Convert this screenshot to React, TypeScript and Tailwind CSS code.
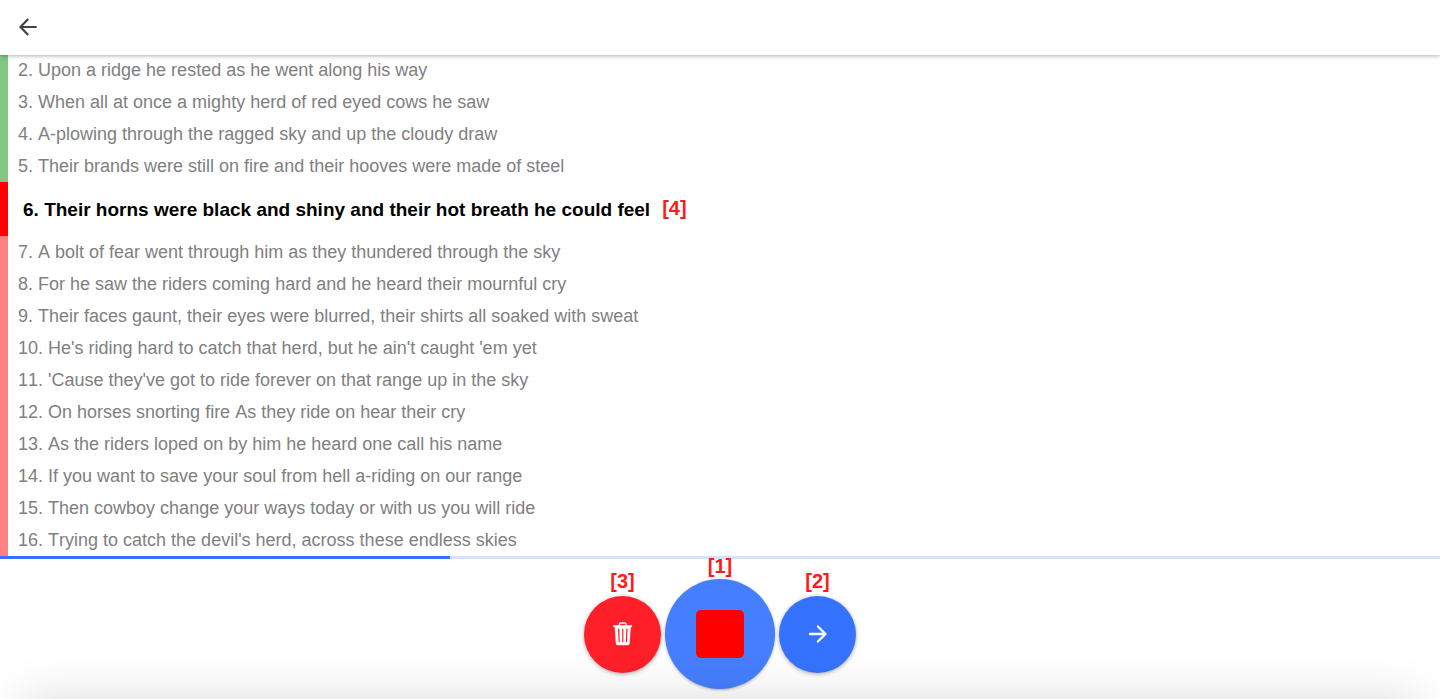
type Status = "recorded" | "current" | "pending";
type Line = { id: number; text: string; status: Status };

const lines: Line[] = [
  { id: 2, text: "Upon a ridge he rested as he went along his way", status: "recorded" },
  { id: 3, text: "When all at once a mighty herd of red eyed cows he saw", status: "recorded" },
  { id: 4, text: "A-plowing through the ragged sky and up the cloudy draw", status: "recorded" },
  { id: 5, text: "Their brands were still on fire and their hooves were made of steel", status: "recorded" },
  { id: 6, text: "Their horns were black and shiny and their hot breath he could feel", status: "current" },
  { id: 7, text: "A bolt of fear went through him as they thundered through the sky", status: "pending" },
  { id: 8, text: "For he saw the riders coming hard and he heard their mournful cry", status: "pending" },
  { id: 9, text: "Their faces gaunt, their eyes were blurred, their shirts all soaked with sweat", status: "pending" },
  { id: 10, text: "He's riding hard to catch that herd, but he ain't caught 'em yet", status: "pending" },
  { id: 11, text: "'Cause they've got to ride forever on that range up in the sky", status: "pending" },
  { id: 12, text: "On horses snorting fire As they ride on hear their cry", status: "pending" },
  { id: 13, text: "As the riders loped on by him he heard one call his name", status: "pending" },
  { id: 14, text: "If you want to save your soul from hell a-riding on our range", status: "pending" },
  { id: 15, text: "Then cowboy change your ways today or with us you will ride", status: "pending" },
  { id: 16, text: "Trying to catch the devil's herd, across these endless skies", status: "pending" },
];

const rowStyles: Record<Status, string> = {
  recorded: "h-8 border-[#81c784] pl-[10px] text-[18px] text-[#808080]",
  current: "h-[54px] border-[#ff0000] pt-0.5 pl-[15px] text-[19px] font-bold text-black",
  pending: "h-8 border-[#ff8080] pl-[10px] text-[18px] text-[#808080]",
};

const marker = "text-[20px] leading-5 font-bold text-[#ff1a1a]";

function BackIcon() {
  return (
    <svg viewBox="0 0 24 24" className="size-6" fill="none" stroke="currentColor" strokeWidth="2.2" aria-hidden="true">
      <path d="M20.7 12H5M12.2 4.1 4.5 12l7.7 7.9" />
    </svg>
  );
}

function ForwardIcon() {
  return (
    <svg
      viewBox="0 0 24 24"
      className="size-6"
      fill="none"
      stroke="currentColor"
      strokeWidth="2.3"
      strokeLinecap="round"
      strokeLinejoin="round"
      aria-hidden="true"
    >
      <path d="M4 12H19M11.900 4.500 19.500 12l-7.600 7.500" />
    </svg>
  );
}

function TrashIcon() {
  return (
    <svg viewBox="0 0 28 28" className="size-7" fill="currentColor" aria-hidden="true">
      <path
        fillRule="evenodd"
        d="M9.800 5.300V4q0-1.700 1.700-1.700h4.500q1.700 0 1.700 1.700v1.300h4.800q.7 0 .7.900t-.7.900h-.700l-1.100 16.200q-.2 1.900-2 1.900H8.800q-1.800 0-2-1.900L5.700 7.100h-.900q-.7 0-.7-.9t.7-.9zM11.200 5.300h5.100V3.700h-5.100zM9 8.700l.6 13.600h1.200l-.5-13.600zM13.200 8.700v13.600h1.200V8.700zM17.300 8.700l-.5 13.600h1.200l.6-13.600z"
      />
    </svg>
  );
}

export default function App() {
  return (
    <div className="flex h-screen flex-col overflow-hidden bg-white font-['Liberation_Sans',Arial,sans-serif] [font-kerning:none]">
      <header className="relative z-10 -mb-px flex h-[55px] shrink-0 items-center bg-white px-4 pb-px shadow-[0_1px_4px_rgba(0,0,0,0.3)]">
        <button type="button" aria-label="Back" className="text-[#424242]">
          <BackIcon />
        </button>
      </header>

      <main className="min-h-0 flex-1 overflow-hidden">
        {lines.map((line) => (
          <div key={line.id} className={`flex items-center border-l-8 ${rowStyles[line.status]}`}>
            <p>
              {line.id}. {line.text}
            </p>
            {line.status === "current" && <span className={`${marker} ml-3 pb-1`}>[4]</span>}
          </div>
        ))}
      </main>

      <div
        role="progressbar"
        aria-label="Lines recorded"
        aria-valuenow={31}
        className="h-[3px] shrink-0 bg-[#d6e2ff]"
      >
        <div className="h-full w-[31.25%] bg-[#3573ff]" />
      </div>

      <footer className="relative flex h-[140px] shrink-0 items-center justify-center gap-1 pt-[10px]">
        <div className="relative">
          <span className={`${marker} absolute inset-x-0 bottom-full mb-[5px] text-center`}>[3]</span>
          <button
            type="button"
            aria-label="Delete recording"
            className="flex size-[77px] items-center justify-center rounded-full bg-[#ff1f29] text-white shadow-[0_1px_4px_rgba(0,0,0,0.35)]"
          >
            <TrashIcon />
          </button>
        </div>
        <div className="relative">
          <span className={`${marker} absolute inset-x-0 bottom-full mb-[3px] text-center`}>[1]</span>
          <button
            type="button"
            aria-label="Stop recording"
            className="flex size-[110px] items-center justify-center rounded-full bg-[#457eff] shadow-[0_1px_3px_rgba(0,0,0,0.3)]"
          >
            <span className="size-12 rounded-[5px] bg-[#ff0000]" />
          </button>
        </div>
        <div className="relative">
          <span className={`${marker} absolute inset-x-0 bottom-full mb-[5px] text-center`}>[2]</span>
          <button
            type="button"
            aria-label="Next line"
            className="flex size-[77px] items-center justify-center rounded-full bg-[#3573ff] text-white shadow-[0_1px_4px_rgba(0,0,0,0.35)]"
          >
            <ForwardIcon />
          </button>
        </div>
        <div className="pointer-events-none absolute inset-x-6 top-full h-20 shadow-[0_0_50px_rgba(0,0,0,0.14)]" />
      </footer>
    </div>
  );
}
